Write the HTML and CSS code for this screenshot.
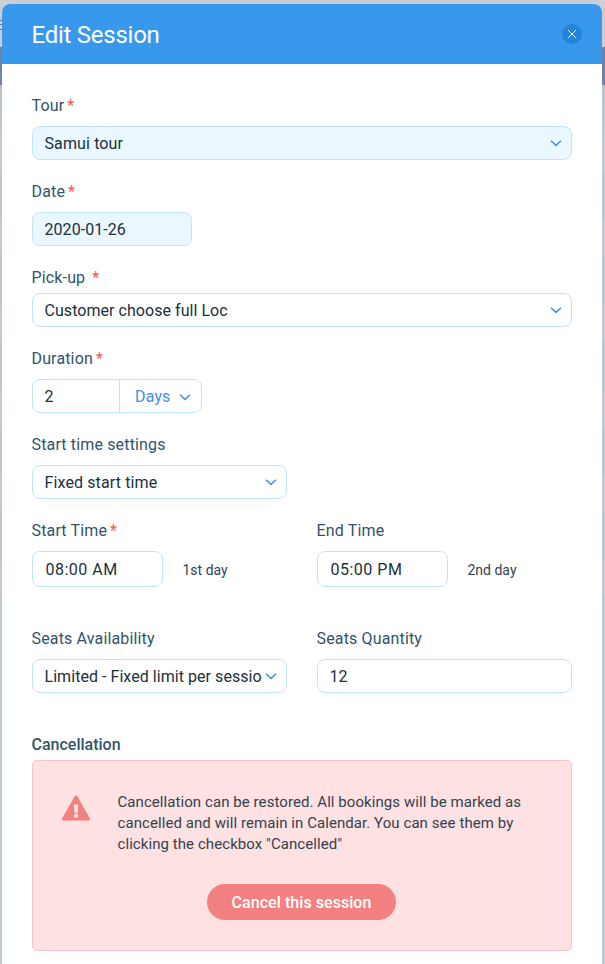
FILE: index.html
```html
<!DOCTYPE html>
<html lang="en">
<head>
<meta charset="utf-8">
<title>Edit Session</title>
<link rel="stylesheet" href="styles.css">
</head>
<body>
<svg class="defs" width="0" height="0"><symbol id="chevron" viewBox="0 0 12 8"><path d="M1 1.8 6 6.4 11 1.8" fill="none" stroke="currentColor" stroke-width="1.5"/></symbol></svg>
<div class="page-edge"></div>
<main class="modal">
  <header class="modal-header">
    <h1>Edit Session</h1>
    <button class="close" aria-label="Close"><svg width="10" height="10" viewBox="0 0 10 10"><path d="M1 1 9 9M9 1 1 9" stroke="#fff" stroke-width="1"/></svg></button>
  </header>
  <div class="form">
    <div class="field"><div class="label">Tour<b>*</b></div>
      <div class="control filled"><span class="wide-text">Samui tour</span><svg class="chev"><use href="#chevron"/></svg></div></div>
    <div class="field"><div class="label">Date<b>*</b></div>
      <div class="control filled date"><span>2020-01-26</span></div></div>
    <div class="field tight"><div class="label">Pick-up<b class="wide">*</b></div>
      <div class="control"><span>Customer choose full Loc</span><svg class="chev"><use href="#chevron"/></svg></div></div>
    <div class="field"><div class="label">Duration<b>*</b></div>
      <div class="control duration"><span class="count">2</span><span class="unit">Days<svg class="chev"><use href="#chevron"/></svg></span></div></div>
    <div class="field"><div class="label">Start time settings</div>
      <div class="control half"><span class="wide-text">Fixed start time</span><svg class="chev"><use href="#chevron"/></svg></div></div>
    <div class="columns">
      <div class="field"><div class="label">Start Time<b>*</b></div>
        <div class="time-row"><div class="control time"><span>08:00 AM</span></div><span class="day">1st day</span></div></div>
      <div class="field"><div class="label">End Time</div>
        <div class="time-row"><div class="control time"><span>05:00 PM</span></div><span class="day">2nd day</span></div></div>
    </div>
    <div class="columns seats">
      <div class="field"><div class="label">Seats Availability</div>
        <div class="control"><span class="limit">Limited - Fixed limit per sessio</span><svg class="chev"><use href="#chevron"/></svg></div></div>
      <div class="field"><div class="label">Seats Quantity</div>
        <div class="control"><span>12</span></div></div>
    </div>
    <section class="cancellation">
      <h2>Cancellation</h2>
      <div class="notice">
        <div class="notice-text">
          <svg class="warning" width="30" height="26" viewBox="0 0 30 26"><path d="M15 2 27.5 24H2.5Z" fill="#f38181" stroke="#f38181" stroke-width="3" stroke-linejoin="round"/><path d="M12.8 9.5H17.4L16.8 17.8H13.4Z" fill="#fde1e3"/><circle cx="15.1" cy="20.7" r="2.2" fill="#fde1e3"/></svg>
          <p>Cancellation can be restored. All bookings will be marked as<br>cancelled and will remain in Calendar. You can see them by<br>clicking the checkbox "Cancelled"</p>
        </div>
        <button class="cancel">Cancel this session</button>
      </div>
    </section>
  </div>
</main>
</body>
</html>
```
FILE: styles.css
```css
* { box-sizing: border-box; }
body {
  margin: 0;
  height: 964px;
  overflow: hidden;
  padding: 4px 3px 0 2px;
  font: 16px/20px Roboto, sans-serif;
  color: #20303c;
  background: linear-gradient(#cbced5 0 47px, #7080a3 47px, #6f83ae 85px, #b9c2cc 85px, #c0c9d2 135px, #c6cad4 135px 170px, #bcc6d1 170px 220px, #c6cad4 220px 255px, #bcc6d1 255px 305px, #c6cad4 305px 340px, #bcc6d1 340px 391px, #c6cad4 391px 426px, #bcc6d1 426px 476px, #c6cad4 476px 511px, #bcc6d1 511px 561px, #c6cad4 561px 596px, #bec8d2 596px);
}
.defs { position: absolute; }
.page-edge {
  position: absolute; left: 0; top: 20px; width: 2px; height: 10px;
  background: linear-gradient(#70757d 0 1px, transparent 1px 4px, #70757d 4px 5px, transparent 5px 9px, #70757d 9px);
}
.modal { height: 964px; background: #fff; border-radius: 8px 8px 0 0; overflow: hidden; }
.modal-header {
  display: flex; align-items: center; justify-content: space-between;
  height: 60px; padding: 0 20px 0 29.5px; background: #3899ec; color: #fff;
}
h1 { margin: 2px 0 0; font-size: 24px; line-height: 30px; font-weight: 400; letter-spacing: -.25px; }
button { border: 0; padding: 0; font-family: inherit; }
.close { display: flex; align-items: center; justify-content: center; width: 20px; height: 20px; border-radius: 50%; background: #2384db; }
.form { display: flex; flex-direction: column; gap: 21px; padding: 31px 30px 0; }
.field { display: flex; flex-direction: column; gap: 11px; min-width: 0; }
.field.tight { gap: 6px; }
.label { height: 20px; line-height: 22px; letter-spacing: .15px; margin-left: -.5px; color: #32536a; }
.label b { margin-left: 3px; font-weight: 400; color: #ff5252; }
.label b.wide { margin-left: 7px; }
.control {
  display: flex; align-items: center; justify-content: space-between;
  height: 34px; padding: 0 9.5px 0 11.5px; border: 1px solid #c1e4fe; border-radius: 8px; background: #fff;
  white-space: nowrap; line-height: 22px; letter-spacing: .05px;
}
.control > span { padding-top: 1px; }
.wide-text { letter-spacing: .12px; }
.filled { background: #eaf7ff; }
.date { width: 160px; }
.half { width: 255px; }
.chev { flex: none; width: 12px; height: 8px; color: #4390e8; }
.duration { width: 170px; padding: 0; align-items: stretch; justify-content: flex-start; line-height: 33px; }
.duration .count { width: 87px; padding: 0 0 0 11.5px; border-right: 1px solid #c1e4fe; }
.unit { display: flex; align-items: center; gap: 8px; padding-left: 15px; color: #4390e8; letter-spacing: .15px; }
.columns { display: grid; grid-template-columns: 255px 255px; gap: 30px; }
.time-row { display: flex; align-items: center; gap: 19.5px; }
.time { width: 131px; height: 36px; padding-left: 12.5px; letter-spacing: .5px; }
.day { font-size: 14px; color: #34424e; padding-top: 2px; }
.seats { margin-top: 20px; }
.limit { letter-spacing: .05px; }
.cancellation { margin-top: 20px; }
h2 { height: 20px; margin: 0 0 6px -.5px; font-size: 16px; line-height: 22px; font-weight: 500; color: #32536a; }
.notice { height: 191px; padding: 30px 29px; border: 1px solid #f5c5c8; border-radius: 5px; background: #fde1e3; }
.notice-text { display: flex; gap: 26.5px; height: 63px; margin-left: -1px; }
.warning { margin-top: 4px; flex: none; }
p { margin: 1px 0 0; font-size: 15px; line-height: 21px; letter-spacing: .07px; color: #34424e; white-space: nowrap; }
.cancel { display: block; width: 189px; height: 36px; margin: 30px 0 0 145px; border-radius: 18px; background: #f38181; color: #fff; font-size: 16px; font-weight: 500; letter-spacing: .06px; }
```
